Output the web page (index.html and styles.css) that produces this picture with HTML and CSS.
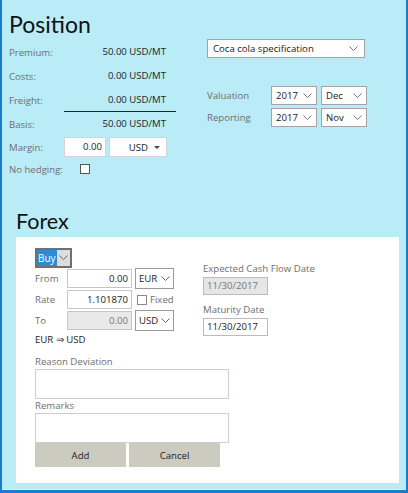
FILE: index.html
```html
<!DOCTYPE html>
<html>
<head>
<meta charset="utf-8">
<link rel="stylesheet" href="styles.css">
</head>
<body>
<div class="page">
  <section class="position">
    <div class="pos-left">
      <h1 class="title">Position</h1>
      <div class="row"><span class="lbl">Premium:</span><span class="val">50.00 USD/MT</span></div>
      <div class="row"><span class="lbl">Costs:</span><span class="val">0.00 USD/MT</span></div>
      <div class="row"><span class="lbl">Freight:</span><span class="val underline">0.00 USD/MT</span></div>
      <div class="row"><span class="lbl">Basis:</span><span class="val">50.00 USD/MT</span></div>
      <div class="row margin-row"><span class="lbl">Margin:</span><span class="num-input">0.00</span><span class="cur-select">USD<span class="tri"></span></span></div>
      <div class="row hedge-row"><span class="lbl">No hedging:</span><span class="check"></span></div>
    </div>
    <div class="pos-right">
      <div class="sel spec"><span>Coca cola specification</span><svg class="chev" width="9" height="6" viewBox="0 0 9 6"><polyline points="0.5,0.5 4.5,4.5 8.5,0.5" fill="none" stroke="#777" stroke-width="1"/></svg></div>
      <div class="periods">
        <div class="prow"><span class="lbl plbl">Valuation</span><div class="sel small"><span>2017</span><svg class="chev" width="9" height="6" viewBox="0 0 9 6"><polyline points="0.5,0.5 4.5,4.5 8.5,0.5" fill="none" stroke="#777" stroke-width="1"/></svg></div><div class="sel small"><span>Dec</span><svg class="chev" width="9" height="6" viewBox="0 0 9 6"><polyline points="0.5,0.5 4.5,4.5 8.5,0.5" fill="none" stroke="#777" stroke-width="1"/></svg></div></div>
        <div class="prow"><span class="lbl plbl">Reporting</span><div class="sel small"><span>2017</span><svg class="chev" width="9" height="6" viewBox="0 0 9 6"><polyline points="0.5,0.5 4.5,4.5 8.5,0.5" fill="none" stroke="#777" stroke-width="1"/></svg></div><div class="sel small"><span>Nov</span><svg class="chev" width="9" height="6" viewBox="0 0 9 6"><polyline points="0.5,0.5 4.5,4.5 8.5,0.5" fill="none" stroke="#777" stroke-width="1"/></svg></div></div>
      </div>
    </div>
  </section>
  <h2 class="title forex-title">Forex</h2>
  <section class="forex">
    <div class="fx-top">
      <div class="fx-left">
        <div class="buy"><span class="buy-txt">Buy</span><span class="buy-arrow"><svg width="9" height="6" viewBox="0 0 9 6"><polyline points="0.5,0.5 4.5,4.5 8.5,0.5" fill="none" stroke="#666" stroke-width="1"/></svg></span></div>
        <div class="frow"><span class="flbl">From</span><span class="fin">0.00</span><div class="sel cur"><span>EUR</span><svg class="chev" width="9" height="6" viewBox="0 0 9 6"><polyline points="0.5,0.5 4.5,4.5 8.5,0.5" fill="none" stroke="#666" stroke-width="1"/></svg></div></div>
        <div class="frow"><span class="flbl">Rate</span><span class="fin">1.101870</span><span class="fixed"><span class="check small-check"></span>Fixed</span></div>
        <div class="frow"><span class="flbl">To</span><span class="fin disabled">0.00</span><div class="sel cur"><span>USD</span><svg class="chev" width="9" height="6" viewBox="0 0 9 6"><polyline points="0.5,0.5 4.5,4.5 8.5,0.5" fill="none" stroke="#666" stroke-width="1"/></svg></div></div>
        <div class="pair">EUR ⇒ USD</div>
      </div>
      <div class="fx-right">
        <div class="dlbl">Expected Cash Flow Date</div>
        <div class="date disabled">11/30/2017</div>
        <div class="dlbl mat">Maturity Date</div>
        <div class="date">11/30/2017</div>
      </div>
    </div>
    <div class="tlbl">Reason Deviation</div>
    <div class="tarea"></div>
    <div class="tlbl remarks">Remarks</div>
    <div class="tarea"></div>
    <div class="buttons"><button class="btn">Add</button><button class="btn">Cancel</button></div>
  </section>
</div>
</body>
</html>
```
FILE: styles.css
```css
* { box-sizing: border-box; }
html, body { margin: 0; padding: 0; }
body { font-family: "Open Sans", "Noto Sans", sans-serif; font-size: 9.6px; color: #222; }
.page {
  width: 408px; height: 493px;
  background: #b9ecf7;
  border-left: 2px solid #1a7ccc;
  border-right: 2px solid #1a7ccc;
  border-bottom: 3px solid #1a7ccc;
  box-shadow: inset 0 -1px 0 #d6f5fb;
  overflow: hidden;
}
.position { display: flex; padding-left: 7px; height: 196px; }
.pos-left { width: 167px; }
.title { margin: 0; font-family: Lato, "Open Sans", sans-serif; font-weight: normal; font-size: 23px; color: #111; line-height: 40px; height: 40px; padding-top: 4px; }
.row { display: flex; align-items: center; height: 24px; }
.lbl { color: #6e6e6e; width: 55px; flex: none; white-space: nowrap; }
.val { flex: 1; text-align: right; padding-right: 10px; height: 24px; line-height: 24px; }
.val.underline { border-bottom: 1px solid #222; line-height: 23px; }
.margin-row { height: 22px; }
.num-input { width: 42px; height: 20px; background: #fff; border: 1px solid #d4d4d4; text-align: right; padding-right: 3px; line-height: 18px; }
.cur-select { width: 58px; height: 20px; margin-left: 3px; background: #fff; border: 1px solid #d4d4d4; display: flex; align-items: center; justify-content: flex-end; padding-right: 6px; }
.tri { width: 0; height: 0; border-left: 3px solid transparent; border-right: 3px solid transparent; border-top: 3px solid #444; margin-left: 6px; }
.hedge-row { height: 22px; }
.check { width: 10px; height: 10px; border: 1px solid #555; background: #fff; margin-left: 16px; display: inline-block; flex: none; }
.pos-right { margin-left: 31px; padding-top: 39px; }
.sel { display: flex; align-items: center; justify-content: space-between; background: #fff; border: 1px solid #a3a3a3; height: 19px; padding: 0 4px 0 4px; color: #222; }
.spec { width: 158px; padding-left: 5px; padding-right: 6px; }
.periods { margin-top: 28px; display: flex; flex-direction: column; gap: 3px; }
.prow { display: flex; align-items: center; gap: 4px; }
.plbl { width: 60px; }
.small { width: 46px; }
.forex-title { padding-left: 14px; height: 41px; line-height: 41px; font-size: 21.5px; padding-top: 5px; }
.forex {
  margin-left: 14px; width: 383px; height: 246px; background: #fff;
  padding: 11px 0 0 19px;
}
.fx-top { display: flex; }
.fx-left { width: 168px; }
.buy { display: inline-flex; height: 20px; border: 2px solid #707070; background: #ddd; align-items: stretch; }
.buy-txt { background: #2a8bd6; color: #fff; padding: 0 1px; line-height: 16px; font-size: 10px; }
.buy-arrow { width: 13px; display: flex; align-items: center; justify-content: center; }
.frow { display: flex; align-items: center; height: 21px; }
.flbl { width: 32px; color: #6e6e6e; }
.fin { width: 65px; height: 19px; border: 1px solid #c7c7c7; text-align: right; padding-right: 3px; line-height: 17px; color: #222; }
.fin.disabled { background: #e9e9e9; color: #777; }
.cur { width: 39px; height: 21px; margin-left: 3px; padding: 0 3px; border-color: #9a9a9a; }
.fixed { display: flex; align-items: center; color: #6e6e6e; margin-left: 5px; }
.small-check { margin-left: 0; margin-right: 3px; border-color: #888; }
.pair { margin-top: 1px; height: 16px; line-height: 16px; color: #222; }
.fx-right { padding-top: 13px; }
.dlbl { color: #6e6e6e; height: 16px; line-height: 16px; }
.mat { margin-top: 7px; }
.date { width: 65px; height: 18px; border: 1px solid #bbb; line-height: 16px; padding-left: 3px; color: #222; }
.date.disabled { background: #e6e6e6; color: #777; }
.tlbl { color: #6e6e6e; margin-top: 7px; height: 14px; line-height: 14px; }
.remarks { margin-top: 0; }
.tarea { width: 194px; height: 30px; border: 1px solid #ccd; }
.buttons { display: flex; gap: 3px; }
.btn { width: 91px; height: 24px; border: none; background: #cccbbf; font: inherit; color: #222; padding: 0; }
```
